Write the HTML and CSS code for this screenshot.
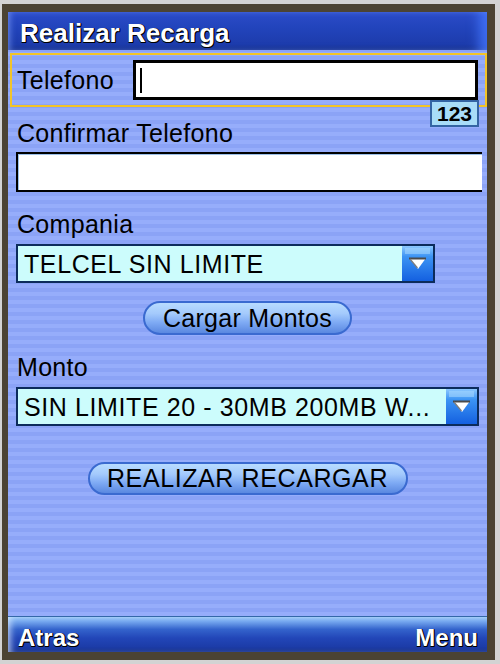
FILE: index.html
```html
<!DOCTYPE html>
<html lang="es">
<head>
    <meta charset="UTF-8">
    <meta name="viewport" content="width=device-width, initial-scale=1.0">
    <title>Realizar Recarga</title>
    <link rel="stylesheet" href="styles.css">
</head>
<body>
    <div class="frame">
        <div class="screen">
            <div class="title-bar">Realizar Recarga</div>

            <div class="form">
                <div class="field-focus">
                    <div class="field-label">Telefono</div>
                    <div class="text-input"><span class="caret"></span></div>
                    <span class="input-mode">123</span>
                </div>

                <div class="label label-first">Confirmar Telefono</div>
                <div class="text-input wide"></div>

                <div class="label">Compania</div>
                <div class="select short">
                    <span class="select-text">TELCEL SIN LIMITE</span>
                    <svg class="select-arrow" width="31" height="35" viewBox="0 0 31 35">
                        <defs>
                            <linearGradient id="arrowBg1" x1="0" y1="0" x2="0" y2="1">
                                <stop offset="0" stop-color="#8cc8ff"/>
                                <stop offset="0.3" stop-color="#3c94f4"/>
                                <stop offset="1" stop-color="#1460e0"/>
                            </linearGradient>
                        </defs>
                        <rect width="31" height="35" fill="url(#arrowBg1)"/>
                        <rect x="3" y="2" width="25" height="6" fill="#a8d8ff" opacity="0.55"/>
                        <polygon points="7,12 24,12 16,23" fill="#ffffff"/>
                        <polyline points="7,12.5 24,12.5" stroke="#4a4a4a" stroke-width="2"/>
                        <polyline points="8,13 15.5,22" stroke="#7a7a7a" stroke-width="1.2" fill="none"/>
                    </svg>
                </div>

                <button class="pill-button small">Cargar Montos</button>

                <div class="label">Monto</div>
                <div class="select long">
                    <span class="select-text">SIN LIMITE 20 - 30MB 200MB W...</span>
                    <svg class="select-arrow" width="31" height="35" viewBox="0 0 31 35">
                        <defs>
                            <linearGradient id="arrowBg2" x1="0" y1="0" x2="0" y2="1">
                                <stop offset="0" stop-color="#8cc8ff"/>
                                <stop offset="0.3" stop-color="#3c94f4"/>
                                <stop offset="1" stop-color="#1460e0"/>
                            </linearGradient>
                        </defs>
                        <rect width="31" height="35" fill="url(#arrowBg2)"/>
                        <rect x="3" y="2" width="25" height="6" fill="#a8d8ff" opacity="0.55"/>
                        <polygon points="7,12 24,12 16,23" fill="#ffffff"/>
                        <polyline points="7,12.5 24,12.5" stroke="#4a4a4a" stroke-width="2"/>
                        <polyline points="8,13 15.5,22" stroke="#7a7a7a" stroke-width="1.2" fill="none"/>
                    </svg>
                </div>

                <button class="pill-button big">REALIZAR RECARGAR</button>
            </div>

            <div class="soft-bar">
                <span>Atras</span>
                <span>Menu</span>
            </div>
        </div>
    </div>
</body>
</html>
```

FILE: styles.css
```css
* {
    margin: 0;
    padding: 0;
    box-sizing: border-box;
}

body {
    background-color: #d3d3d3;
    font-family: "Liberation Sans", Arial, sans-serif;
    width: 500px;
    height: 664px;
    overflow: hidden;
}

.frame {
    width: 493px;
    height: 656px;
    margin: 4px 0 0 2px;
    border: solid #4b4333;
    border-width: 8px 8px 8px 6px;
}

.screen {
    height: 100%;
    display: flex;
    flex-direction: column;
    overflow: hidden;
    background: repeating-linear-gradient(to bottom, #96adfb 0 4px, #8ba3f6 4px 8px);
}

.title-bar {
    height: 38px;
    padding: 4px 0 0 12px;
    line-height: 34px;
    font-size: 26px;
    font-weight: bold;
    color: #fff;
    text-shadow: 1px 1px 0 #000, 1px 0 0 #000, 0 1px 0 #000;
    background: linear-gradient(to bottom, #2c4cc8 0%, #2244bc 40%, #1d3cac 85%, #142c88 100%);
    box-shadow: inset 4px 0 6px -2px rgba(140, 170, 255, 0.6), inset -14px 0 12px -6px rgba(70, 120, 255, 0.8);
}

.form {
    flex: 1;
    padding-top: 3px;
    color: #000;
    font-size: 25px;
    letter-spacing: 0.3px;
}

.field-focus {
    position: relative;
    display: flex;
    align-items: center;
    width: 477px;
    height: 54px;
    margin-left: 2px;
    padding: 0 7px 0 5px;
    border: 2px solid #f2c428;
}

.field-label {
    width: 116px;
    line-height: 28px;
}

.text-input {
    position: relative;
    width: 345px;
    height: 40px;
    background-color: #fff;
    border: 3px solid #000;
}

.text-input.wide {
    width: 466px;
    margin: 5px 0 0 8px;
    border-width: 2px 0 2px 2px;
    box-shadow: inset 1px 1px 0 #9cc0e8;
}

.caret {
    position: absolute;
    left: 4px;
    top: 5px;
    width: 2px;
    height: 25px;
    background-color: #000;
}

.input-mode {
    position: absolute;
    right: 6px;
    top: 45px;
    width: 49px;
    height: 27px;
    line-height: 23px;
    text-align: center;
    font-size: 21px;
    font-weight: bold;
    letter-spacing: 0;
    background-color: #a8dcf8;
    border: 2px solid #3464a4;
}

.label {
    margin: 18px 0 0 9px;
    line-height: 28px;
}

.label.label-first {
    margin-top: 12px;
}

.select {
    display: flex;
    align-items: center;
    height: 39px;
    margin: 6px 0 0 8px;
    padding-left: 6px;
    background-color: #ccfcfc;
    border: 2px solid #0c2c5c;
}

.select.short {
    width: 419px;
}

.select.long {
    width: 463px;
}

.select-text {
    flex: 1;
    white-space: nowrap;
    overflow: hidden;
    line-height: 28px;
    letter-spacing: 0.6px;
}

.select-arrow {
    display: block;
    flex: none;
}

.pill-button {
    display: block;
    margin: 0 auto;
    font-family: inherit;
    font-size: 25px;
    letter-spacing: 0.3px;
    color: #000;
    border: 2px solid #3a6ad0;
    border-radius: 17px;
    background: linear-gradient(to bottom, #b8dcff 0%, #a4cafc 35%, #7eaaf4 65%, #5a88e0 100%);
    cursor: pointer;
}

.pill-button.small {
    width: 209px;
    height: 34px;
    margin-top: 18px;
    line-height: 28px;
}

.pill-button.big {
    width: 320px;
    height: 33px;
    margin-top: 36px;
    line-height: 27px;
    letter-spacing: 0.6px;
}

.soft-bar {
    display: flex;
    justify-content: space-between;
    height: 36px;
    padding: 7px 9px 0 10px;
    line-height: 28px;
    font-size: 24px;
    font-weight: bold;
    color: #fff;
    text-shadow: 1px 1px 0 #000, 1px 0 0 #000, 0 1px 0 #000;
    border-top: 1px solid #3468a8;
    background: linear-gradient(to bottom, #9ccaf8 0%, #78aaf0 12%, #3464cc 35%, #2246b8 60%, #1c3ca8 85%, #16308c 100%);
    box-shadow: inset 6px 0 6px -3px rgba(220, 235, 255, 0.7);
}
```
